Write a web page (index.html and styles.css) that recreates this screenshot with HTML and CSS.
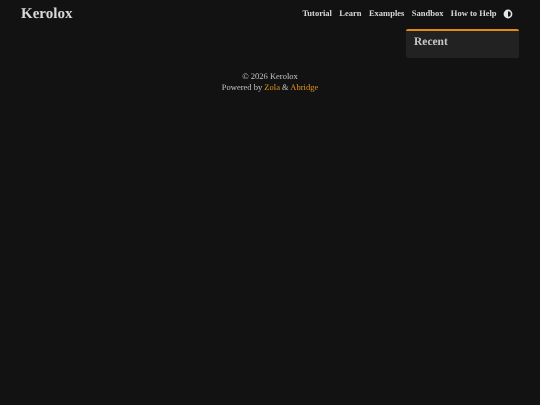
FILE: index.html
```html
<!DOCTYPE html>
<html lang="en">
<head>
    <meta charset="UTF-8">
    <meta name="viewport" content="width=device-width, initial-scale=1.0">
    <title>Kerolox</title>
    <link rel="stylesheet" href="styles.css">
</head>
<body>
    <div class="page">
        <header class="site-header">
            <a class="brand" href="#">Kerolox</a>
            <nav class="site-nav">
                <a href="#">Tutorial</a>
                <a href="#">Learn</a>
                <a href="#">Examples</a>
                <a href="#">Sandbox</a>
                <a href="#">How to Help</a>
                <button class="theme-toggle" aria-label="Toggle theme">
                    <svg viewBox="0 0 10 10" width="10" height="10">
                        <circle cx="5" cy="5" r="4.4" fill="#e6e6e6"/>
                        <path d="M5 2.2a2.8 2.8 0 0 1 0 5.6z" fill="#121212"/>
                    </svg>
                </button>
            </nav>
        </header>
        <main class="content">
            <aside class="recent">
                <h2>Recent</h2>
            </aside>
        </main>
        <footer class="site-footer">
            <p>&copy; 2026 Kerolox</p>
            <p>Powered by <a href="#">Zola</a> &amp; <a href="#">Abridge</a></p>
        </footer>
    </div>
</body>
</html>
```

FILE: styles.css
```css
html {
    background-color: #121212;
}
body {
    margin: 0;
    padding: 0;
    color: #d8d8d8;
    font-family: "Liberation Serif", serif;
    text-rendering: geometricPrecision;
}
.page {
    will-change: transform;
}
a {
    text-decoration: none;
}
.site-header {
    display: flex;
    justify-content: space-between;
    align-items: center;
    height: 26px;
    padding: 0 27px 0 21px;
}
.brand {
    margin-top: 2px;
    color: #d8d8d8;
    font-size: 15px;
    font-weight: bold;
}
.site-nav {
    display: flex;
    align-items: center;
    gap: 7.4px;
}
.site-nav a {
    color: #d8d8d8;
    font-size: 8.5px;
    font-weight: bold;
}
.theme-toggle {
    display: flex;
    margin-left: -1px;
    padding: 1px 0 0;
    border: none;
    background: none;
}
.content {
    display: flex;
    justify-content: flex-end;
    padding: 3px 21px 0;
}
.recent {
    box-sizing: border-box;
    width: 113px;
    height: 29px;
    padding: 5px 8px;
    background-color: #222222;
    border-top: 2px solid #e08c14;
    border-radius: 2px;
}
.recent h2 {
    margin: 0;
    color: #c8c8c8;
    font-size: 11.5px;
    font-weight: bold;
}
.site-footer {
    margin-top: 12.5px;
    text-align: center;
    font-size: 8.5px;
    line-height: 11.7px;
    color: #c4c4c4;
}
.site-footer p {
    margin: 0;
}
.site-footer a {
    color: #e8961e;
}
```
